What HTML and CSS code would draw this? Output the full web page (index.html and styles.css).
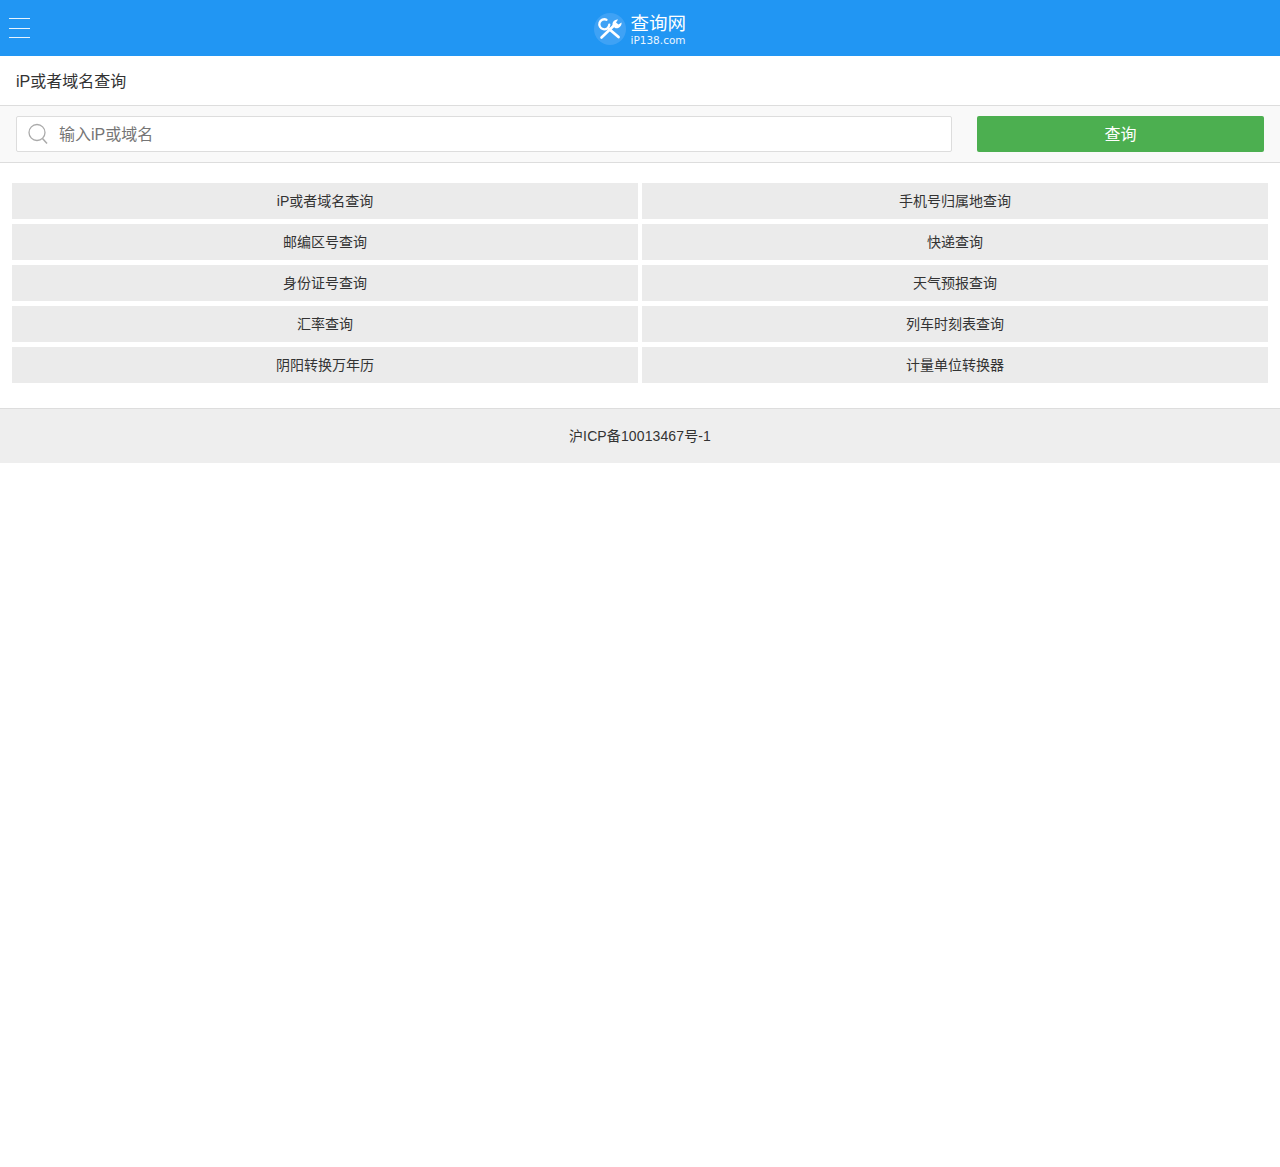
FILE: index.html
```html
<!DOCTYPE html>
<html lang="zh-CN">
<head>
<meta charset="utf-8">
<title>iP或者域名查询</title>
<link rel="stylesheet" href="styles.css">
</head>
<body>
<header class="topbar">
  <div class="menu"><span></span><span></span><span></span></div>
  <div class="logo">
    <svg class="logo-icon" width="32" height="32" viewBox="0 0 32 32">
      <circle cx="16" cy="16" r="16" fill="#3fa2f5"/>
      <g fill="none" stroke="#fff" stroke-linecap="round">
        <path d="M12.500 6.800a5 5 0 1 0 2.800 4.900" stroke-width="2.300"/>
        <path d="M14.500 15.500l10 8.500" stroke-width="2.800"/>
        <path d="M7.500 24.500l13-12.500" stroke-width="2.600"/>
      </g>
      <path d="M24 6.500a5 5 0 0 0-5.500 6l2.500 2.500a5 5 0 0 0 6.500-5.500l-3 2-2.500-2z" fill="#fff"/>
    </svg>
    <div class="logo-text">
      <div class="logo-title">查询网</div>
      <div class="logo-sub">iP138.com</div>
    </div>
  </div>
</header>
<h1 class="page-title">iP或者域名查询</h1>
<form class="search">
  <label class="search-box">
    <svg class="search-icon" width="22" height="22" viewBox="0 0 22 22">
      <circle cx="9" cy="9.500" r="8" fill="none" stroke="#aaa" stroke-width="1.300"/>
      <path d="M14.500 15.500l4.500 5" stroke="#aaa" stroke-width="1.500" fill="none"/>
    </svg>
    <input class="search-input" type="text" placeholder="输入iP或域名">
  </label>
  <button class="search-btn" type="button">查询</button>
</form>
<nav class="links">
  <a class="link">iP或者域名查询</a>
  <a class="link">手机号归属地查询</a>
  <a class="link">邮编区号查询</a>
  <a class="link">快递查询</a>
  <a class="link">身份证号查询</a>
  <a class="link">天气预报查询</a>
  <a class="link">汇率查询</a>
  <a class="link">列车时刻表查询</a>
  <a class="link">阴阳转换万年历</a>
  <a class="link">计量单位转换器</a>
</nav>
<footer class="footer">沪ICP备10013467号-1</footer>
</body>
</html>
```
FILE: styles.css
```css
* { box-sizing: border-box; }
html, body { margin: 0; padding: 0; }
body {
  background: #fff;
  color: #333;
  font-family: "Liberation Sans", "Noto Sans CJK SC", sans-serif;
  font-size: 14px;
}
.topbar {
  height: 56px;
  background: #2196f3;
  display: flex;
  align-items: center;
  justify-content: center;
  position: relative;
}
.menu {
  position: absolute;
  left: 9px;
  top: 18px;
  width: 21px;
  display: flex;
  flex-direction: column;
  gap: 8.500px;
}
.menu span { display: block; height: 1px; background: #e6f3fe; }
.logo { display: flex; align-items: center; gap: 5px; margin-top: 2px; }
.logo-text { color: #fff; width: 56px; padding-top: 1px; }
.logo-title { font-size: 18.500px; line-height: 20px; white-space: nowrap; }
.logo-sub { font-family: "DejaVu Sans", sans-serif; font-size: 10.500px; line-height: 10px; margin-top: 1px; color: #eaf5ff; white-space: nowrap; }
.page-title {
  margin: 0;
  height: 49px;
  padding-left: 16px;
  font-size: 16px;
  font-weight: 400;
  line-height: 51px;
  color: #333;
}
.search {
  height: 58px;
  background: #f9f9f9;
  border-top: 1px solid #ddd;
  border-bottom: 1px solid #ddd;
  display: flex;
  align-items: center;
  padding: 0 16px;
  gap: 25px;
}
.search-box {
  flex: 0 0 936px;
  height: 36px;
  background: #fff;
  border: 1px solid #ddd;
  border-radius: 2px;
  display: flex;
  align-items: center;
  padding-left: 11px;
  gap: 9px;
}
.search-icon { flex: none; }
.search-input {
  flex: 1;
  border: 0;
  outline: 0;
  padding: 2px 0 0;
  background: transparent;
  font: 16px "Liberation Sans", "Noto Sans CJK SC", sans-serif;
  color: #333;
}
.search-input::placeholder { color: #757575; opacity: 1; }
.search-btn {
  flex: 1;
  height: 36px;
  border: 0;
  border-radius: 2px;
  background: #4caf50;
  color: #fff;
  font: 16px "Liberation Sans", "Noto Sans CJK SC", sans-serif;
  padding: 0 0 2px;
}
.links {
  display: grid;
  grid-template-columns: 626px 626px;
  column-gap: 4px;
  row-gap: 5px;
  padding: 20px 12px 25px;
}
.link {
  height: 36px;
  line-height: 36px;
  background: #ebebeb;
  text-align: center;
  color: #333;
  font-size: 14px;
}
.footer {
  height: 55px;
  background: #eee;
  border-top: 1px solid #ddd;
  text-align: center;
  line-height: 54px;
  color: #333;
  font-size: 14px;
  letter-spacing: 0.120px;
}
```
